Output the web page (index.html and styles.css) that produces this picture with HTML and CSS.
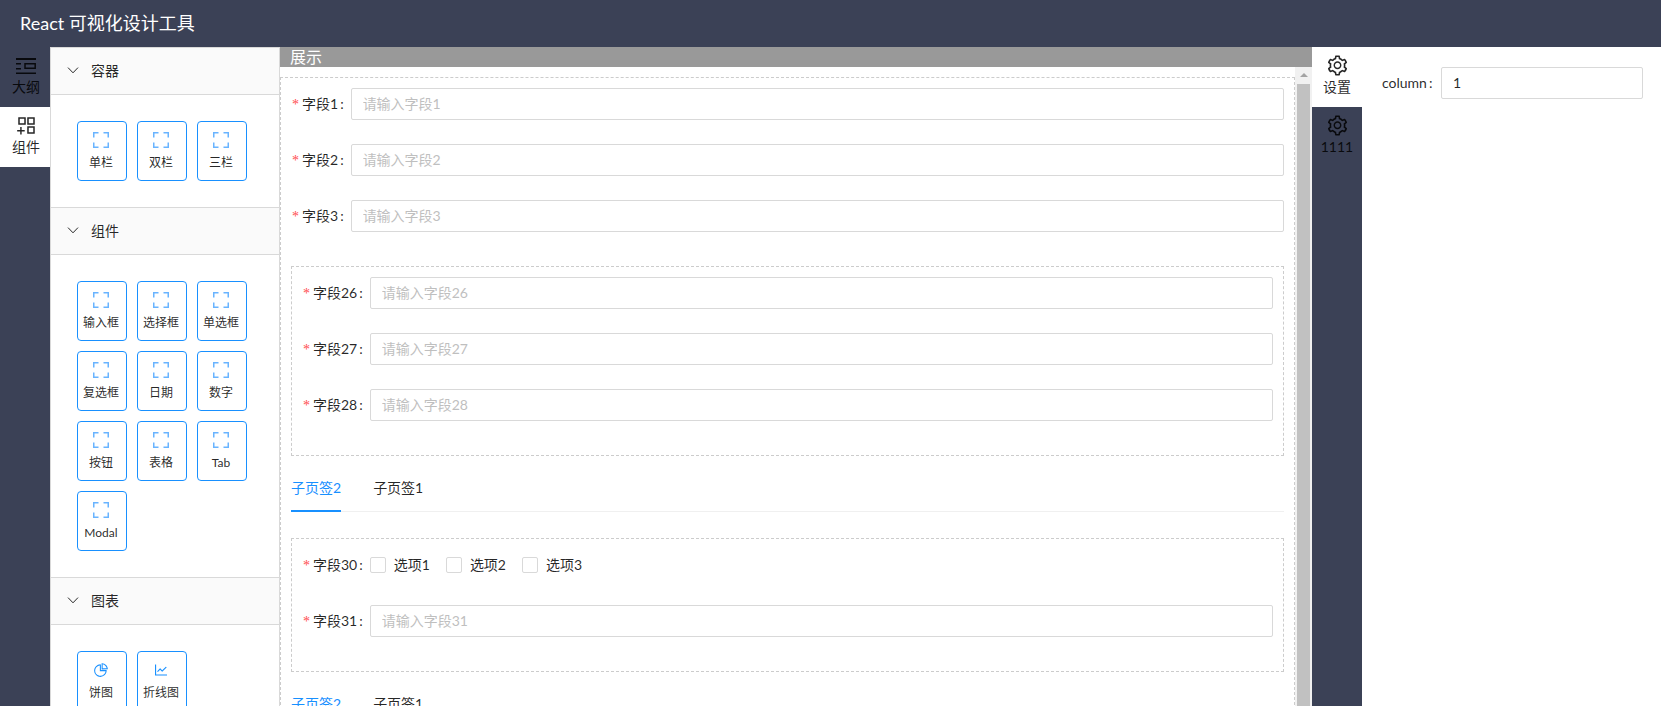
FILE: index.html
```html
<!DOCTYPE html>
<html lang="zh-CN">
<head>
<meta charset="utf-8">
<title>React 可视化设计工具</title>
<link rel="stylesheet" href="styles.css">
</head>
<body>
<svg class="defs" aria-hidden="true">
  <symbol id="i-corners" viewBox="0 0 16 16"><path d="M.75 5.5V.75H5.5M10.5.75h4.75V5.5M15.25 10.5v4.75H10.5M5.5 15.25H.75V10.5" fill="none" stroke="currentColor" stroke-width="1.5"/></symbol>
  <symbol id="i-down" viewBox="0 0 12 12"><path d="M1 3.6 6 8.8l5-5.2" fill="none" stroke="currentColor" stroke-width="1"/></symbol>
  <symbol id="i-outline" viewBox="0 0 20 16"><path d="M0 0h20v2H0zM0 14.500h20v2H0zM0 5h5v1.500H0zM0 10h5v1.500H0z" fill="currentColor"/><path d="M9 5.750h10.200v4.500H9z" fill="none" stroke="currentColor" stroke-width="1.500"/></symbol>
  <symbol id="i-add" viewBox="0 0 1024 1024"><path fill="currentColor" d="M464 144H160c-8.800 0-16 7.200-16 16v304c0 8.800 7.200 16 16 16h304c8.800 0 16-7.200 16-16V160c0-8.800-7.200-16-16-16zm-52 268H212V212h200v200zm452-268H560c-8.800 0-16 7.200-16 16v304c0 8.800 7.200 16 16 16h304c8.800 0 16-7.200 16-16V160c0-8.800-7.200-16-16-16zm-52 268H612V212h200v200zm52 132H560c-8.800 0-16 7.200-16 16v304c0 8.800 7.200 16 16 16h304c8.800 0 16-7.200 16-16V560c0-8.800-7.200-16-16-16zm-52 268H612V612h200v200zM424 712H296V584c0-4.400-3.600-8-8-8h-48c-4.400 0-8 3.600-8 8v128H104c-4.400 0-8 3.600-8 8v48c0 4.400 3.600 8 8 8h128v128c0 4.400 3.600 8 8 8h48c4.400 0 8-3.600 8-8V776h128c4.400 0 8-3.600 8-8v-48c0-4.400-3.600-8-8-8z"/></symbol>
  <symbol id="i-setting" viewBox="0 0 1024 1024"><path fill="currentColor" d="M924.800 625.700l-65.500-56c3.100-19 4.700-38.400 4.700-57.800s-1.600-38.800-4.700-57.800l65.500-56a32.030 32.030 0 0 0 9.300-35.200l-.9-2.600a443.740 443.740 0 0 0-79.700-137.900l-1.800-2.100a32.120 32.120 0 0 0-35.100-9.500l-81.300 28.900c-30-24.600-63.500-44-99.700-57.600l-15.700-85a32.050 32.050 0 0 0-25.800-25.700l-2.700-.5c-52.100-9.400-106.900-9.400-159 0l-2.700.5a32.050 32.050 0 0 0-25.800 25.700l-15.800 85.400a351.860 351.860 0 0 0-99 57.400l-81.900-29.100a32 32 0 0 0-35.100 9.500l-1.800 2.100a446.020 446.020 0 0 0-79.700 137.900l-.9 2.600c-4.500 12.500-.8 26.500 9.300 35.200l66.300 56.600c-3.100 18.800-4.600 38-4.600 57.100 0 19.200 1.500 38.400 4.600 57.100L99 625.500a32.030 32.030 0 0 0-9.300 35.200l.9 2.600c18.100 50.400 44.900 96.900 79.700 137.900l1.800 2.100a32.120 32.120 0 0 0 35.100 9.500l81.900-29.100c29.800 24.500 63.100 43.900 99 57.400l15.800 85.400a32.050 32.050 0 0 0 25.800 25.700l2.700.5a449.400 449.400 0 0 0 159 0l2.700-.5a32.050 32.050 0 0 0 25.800-25.700l15.700-85a350 350 0 0 0 99.700-57.600l81.300 28.900a32 32 0 0 0 35.100-9.500l1.800-2.100c34.800-41.100 61.600-87.500 79.700-137.900l.9-2.600c4.500-12.300.8-26.300-9.300-35zM788.300 465.900c2.500 15.100 3.800 30.600 3.800 46.100s-1.300 31-3.800 46.100l-6.600 40.100 74.700 63.900a370.030 370.030 0 0 1-42.600 73.600L721 702.800l-31.400 25.800c-23.900 19.600-50.500 35-79.300 45.800l-38.100 14.300-17.900 97a377.500 377.500 0 0 1-85 0l-17.900-97.200-37.800-14.500c-28.500-10.800-55-26.200-78.700-45.700l-31.400-25.900-93.400 33.200c-17-22.900-31.200-47.600-42.600-73.600l75.500-64.500-6.500-40c-2.400-14.900-3.700-30.300-3.700-45.500 0-15.300 1.200-30.600 3.700-45.500l6.500-40-75.500-64.500c11.300-26.100 25.600-50.700 42.600-73.600l93.400 33.200 31.400-25.900c23.700-19.500 50.200-34.900 78.700-45.700l37.900-14.300 17.900-97.200c28.100-3.200 56.800-3.200 85 0l17.900 97 38.100 14.300c28.700 10.800 55.400 26.200 79.300 45.800l31.400 25.800 92.800-32.900c17 22.900 31.200 47.600 42.600 73.600L781.800 426l6.500 39.900zM512 326c-97.200 0-176 78.800-176 176s78.800 176 176 176 176-78.800 176-176-78.800-176-176-176zm79.200 255.200A111.600 111.600 0 0 1 512 614c-29.900 0-58-11.700-79.200-32.800A111.600 111.600 0 0 1 400 502c0-29.900 11.700-58 32.800-79.200C454 401.600 482.100 390 512 390c29.900 0 58 11.600 79.200 32.800A111.600 111.600 0 0 1 624 502c0 29.900-11.700 58-32.800 79.200z"/></symbol>
  <symbol id="i-pie" viewBox="0 0 1024 1024"><path fill="currentColor" d="M864 518H506V160c0-4.400-3.600-8-8-8h-26a398.460 398.460 0 0 0-282.800 117.100 398.190 398.190 0 0 0-85.700 127.100A397.610 397.610 0 0 0 72 552a398.460 398.460 0 0 0 117.100 282.800c36.700 36.700 79.500 65.600 127.100 85.700A397.610 397.610 0 0 0 472 952a398.460 398.460 0 0 0 282.800-117.100c36.700-36.700 65.600-79.500 85.700-127.100A397.610 397.610 0 0 0 872 552v-26c0-4.400-3.600-8-8-8zM705.700 787.800A331.590 331.590 0 0 1 470.400 884c-88.100-.4-170.900-34.900-233.200-97.200C174.500 724.100 140 640.700 140 552c0-88.700 34.500-172.100 97.200-234.800 54.600-54.600 124.900-87.900 200.800-95.500V586h364.300c-7.700 76.300-41.300 147-96.600 201.800zM952 462.400l-2.600-28.200c-8.500-92.100-49.400-179-115.200-244.600A399.400 399.400 0 0 0 589 74.600L560.700 72c-4.700-.4-8.700 3.200-8.700 7.900V464c0 4.400 3.600 8 8 8l384-1c4.700 0 8.400-4 8-8.600zm-332.200-58.200V147.600a332.240 332.240 0 0 1 166.400 89.800c45.700 45.600 77 103.600 90 166.100l-256.400.7z"/></symbol>
  <symbol id="i-line" viewBox="0 0 1024 1024"><path fill="currentColor" d="M888 792H200V168c0-4.400-3.600-8-8-8h-56c-4.400 0-8 3.600-8 8v688c0 4.400 3.600 8 8 8h752c4.400 0 8-3.600 8-8v-56c0-4.400-3.600-8-8-8zM305.800 637.700c3.100 3.100 8.100 3.100 11.300 0l138.300-137.600L583 628.500c3.100 3.100 8.200 3.100 11.300 0l275.400-275.300c3.100-3.100 3.100-8.200 0-11.300l-39.600-39.600a8.030 8.030 0 0 0-11.300 0l-230 229.900L461.400 404a8.030 8.030 0 0 0-11.300 0L266.300 586.700a8.030 8.030 0 0 0 0 11.300l39.500 39.700z"/></symbol>
</svg>

<header class="topbar">React 可视化设计工具</header>

<div class="workspace">
  <nav class="rail rail-left">
    <div class="rail-item"><svg class="rail-icon-outline"><use href="#i-outline"/></svg><span>大纲</span></div>
    <div class="rail-item active"><svg class="rail-icon"><use href="#i-add"/></svg><span>组件</span></div>
  </nav>

  <aside class="palette">
    <section class="group">
      <div class="group-head"><svg class="chev"><use href="#i-down"/></svg><span>容器</span></div>
      <div class="group-body">
        <div class="card"><svg class="card-icon soft"><use href="#i-corners"/></svg><span>单栏</span></div>
        <div class="card"><svg class="card-icon soft"><use href="#i-corners"/></svg><span>双栏</span></div>
        <div class="card"><svg class="card-icon soft"><use href="#i-corners"/></svg><span>三栏</span></div>
      </div>
    </section>
    <section class="group">
      <div class="group-head"><svg class="chev"><use href="#i-down"/></svg><span>组件</span></div>
      <div class="group-body">
        <div class="card"><svg class="card-icon soft"><use href="#i-corners"/></svg><span>输入框</span></div>
        <div class="card"><svg class="card-icon soft"><use href="#i-corners"/></svg><span>选择框</span></div>
        <div class="card"><svg class="card-icon soft"><use href="#i-corners"/></svg><span>单选框</span></div>
        <div class="card"><svg class="card-icon soft"><use href="#i-corners"/></svg><span>复选框</span></div>
        <div class="card"><svg class="card-icon soft"><use href="#i-corners"/></svg><span>日期</span></div>
        <div class="card"><svg class="card-icon soft"><use href="#i-corners"/></svg><span>数字</span></div>
        <div class="card"><svg class="card-icon soft"><use href="#i-corners"/></svg><span>按钮</span></div>
        <div class="card"><svg class="card-icon soft"><use href="#i-corners"/></svg><span>表格</span></div>
        <div class="card"><svg class="card-icon soft"><use href="#i-corners"/></svg><span>Tab</span></div>
        <div class="card"><svg class="card-icon soft"><use href="#i-corners"/></svg><span>Modal</span></div>
      </div>
    </section>
    <section class="group">
      <div class="group-head"><svg class="chev"><use href="#i-down"/></svg><span>图表</span></div>
      <div class="group-body">
        <div class="card"><svg class="card-icon"><use href="#i-pie"/></svg><span>饼图</span></div>
        <div class="card"><svg class="card-icon"><use href="#i-line"/></svg><span>折线图</span></div>
      </div>
    </section>
  </aside>

  <main class="stage">
    <div class="stage-title">展示</div>
    <div class="stage-body">
      <div class="canvas">
        <div class="drop">
          <div class="row"><label class="lbl"><i class="star">*</i>字段1<b class="colon">:</b></label><input class="field" placeholder="请输入字段1"></div>
          <div class="row"><label class="lbl"><i class="star">*</i>字段2<b class="colon">:</b></label><input class="field" placeholder="请输入字段2"></div>
          <div class="row"><label class="lbl"><i class="star">*</i>字段3<b class="colon">:</b></label><input class="field" placeholder="请输入字段3"></div>

          <div class="drop nested">
            <div class="row"><label class="lbl"><i class="star">*</i>字段26<b class="colon">:</b></label><input class="field" placeholder="请输入字段26"></div>
            <div class="row"><label class="lbl"><i class="star">*</i>字段27<b class="colon">:</b></label><input class="field" placeholder="请输入字段27"></div>
            <div class="row"><label class="lbl"><i class="star">*</i>字段28<b class="colon">:</b></label><input class="field" placeholder="请输入字段28"></div>
          </div>

          <div class="tabs">
            <div class="tab on">子页签2</div>
            <div class="tab">子页签1</div>
          </div>

          <div class="drop nested">
            <div class="row">
              <label class="lbl"><i class="star">*</i>字段30<b class="colon">:</b></label>
              <div class="checks">
                <span class="check"><i class="box"></i>选项1</span>
                <span class="check"><i class="box"></i>选项2</span>
                <span class="check"><i class="box"></i>选项3</span>
              </div>
            </div>
            <div class="row"><label class="lbl"><i class="star">*</i>字段31<b class="colon">:</b></label><input class="field" placeholder="请输入字段31"></div>
          </div>

          <div class="tabs">
            <div class="tab on">子页签2</div>
            <div class="tab">子页签1</div>
          </div>
        </div>
      </div>
      <div class="scrollbar"><i class="arrow"></i><i class="thumb"></i></div>
    </div>
  </main>

  <nav class="rail">
    <div class="rail-item active"><svg class="rail-icon"><use href="#i-setting"/></svg><span>设置</span></div>
    <div class="rail-item"><svg class="rail-icon"><use href="#i-setting"/></svg><span>1111</span></div>
  </nav>

  <aside class="props">
    <div class="prop-row"><label class="prop-lbl">column<b class="colon-p">:</b></label><input class="field" value="1"></div>
  </aside>
</div>
</body>
</html>
```

FILE: styles.css
```css
* { box-sizing: border-box; }
html, body { margin: 0; height: 100%; overflow: hidden; }
body {
  display: flex;
  flex-direction: column;
  font-family: "Lato", "Noto Sans CJK SC", sans-serif;
  font-size: 14px;
  color: rgba(0, 0, 0, .85);
  background: #fff;
}
.defs { position: absolute; width: 0; height: 0; }

.topbar {
  flex: 0 0 47px;
  background: #3b4156;
  color: #fff;
  font-size: 18px;
  line-height: 47px;
  padding-left: 20px;
}

.workspace { flex: 1; display: flex; min-height: 0; }

.rail { flex: 0 0 50px; background: #3b4156; }
.rail-item {
  height: 60px;
  display: flex;
  flex-direction: column;
  align-items: center;
  padding-top: 7px;
  line-height: 22px;
}
.rail-left .rail-item { padding-left: 2px; }
.rail-item.active { background: #fff; }
.rail-icon { width: 23px; height: 23px; margin-bottom: -1px; flex: none; }
.rail-icon-outline { width: 20px; height: 16px; margin: 4px 0 2px; overflow: visible; flex: none; }

.palette {
  flex: 0 0 230px;
  border: 1px solid #d9d9d9;
  border-bottom: 0;
  overflow: hidden;
  background: #fff;
}
.group-head {
  height: 47px;
  display: flex;
  align-items: center;
  padding: 0 0 2px 16px;
  background: #fafafa;
  border-bottom: 1px solid #d9d9d9;
}
.chev { width: 12px; height: 12px; margin-right: 12px; }
.group-body {
  display: flex;
  flex-wrap: wrap;
  gap: 10px;
  padding: 26px;
  border-bottom: 1px solid #d9d9d9;
}
.card {
  width: 50px;
  height: 60px;
  border: 1px solid #1890ff;
  border-radius: 4px;
  display: flex;
  flex-direction: column;
  align-items: center;
  padding: 10px 2px 0 0;
  font-size: 12px;
  line-height: 20px;
  white-space: nowrap;
}
.card-icon { width: 16px; height: 16px; margin-bottom: 5px; color: #1890ff; flex: none; }
.card-icon.soft { color: #69b4ff; }

.stage { flex: 0 0 1032px; display: flex; flex-direction: column; min-height: 0; }
.stage-title {
  flex: 0 0 20px;
  background: #999;
  color: #fff;
  font-size: 16px;
  line-height: 20px;
  padding-left: 10px;
}
.stage-body { flex: 1; display: flex; min-height: 0; }
.canvas { flex: 1; padding-top: 10px; overflow: hidden; }
.scrollbar {
  flex: 0 0 17px;
  background: #f1f1f1;
  display: flex;
  flex-direction: column;
  align-items: center;
}
.arrow {
  margin: 6px 0 7px;
  width: 0;
  height: 0;
  border: 4px solid transparent;
  border-top: 0;
  border-bottom-color: #a3a3a3;
}
.thumb { flex: 1; width: 13px; background: #c1c1c1; }

.drop { display: flex; flex-direction: column; border: 1px dashed #ccc; padding: 10px 10px 0; }
.nested { margin: 10px 0; padding-bottom: 10px; flex: none; }

.row { display: flex; align-items: center; flex: none; height: 32px; margin-bottom: 24px; }
.lbl { display: flex; align-items: center; white-space: nowrap; flex: none; padding-bottom: 2px; }
.star {
  color: #ff4d4f;
  font-style: normal;
  font-family: "Liberation Serif", serif;
  width: 11px;
  padding: 4px 0 0 1px;
}
.colon { font-weight: 400; margin: 0 7px 0 2px; }
.field {
  flex: 1;
  min-width: 0;
  height: 32px;
  border: 1px solid #d9d9d9;
  border-radius: 2px;
  padding: 3px 11px 5px;
  font: inherit;
  color: rgba(0, 0, 0, .85);
  outline: 0;
  background: #fff;
}
.field::placeholder { color: #bfbfbf; opacity: 1; }

.checks { display: flex; }
.check { display: flex; align-items: center; margin-right: 16px; padding-bottom: 2px; }
.box {
  width: 16px;
  height: 16px;
  border: 1px solid #d9d9d9;
  border-radius: 2px;
  margin: 2px 8px 0 0;
}

.tabs {
  display: flex;
  flex: none;
  gap: 32px;
  margin-bottom: 16px;
  height: 46px;
  border-bottom: 1px solid #f0f0f0;
}
.tab { padding: 12px 0; line-height: 20px; height: 46px; }
.tab.on { color: #1890ff; border-bottom: 2px solid #1890ff; }

.props { flex: 1; padding: 20px 19px 0 20px; }
.prop-row { display: flex; align-items: center; height: 32px; }
.prop-lbl { white-space: nowrap; flex: none; width: 59px; padding-bottom: 2px; }
.colon-p { font-weight: 400; margin-left: 2px; }
```
